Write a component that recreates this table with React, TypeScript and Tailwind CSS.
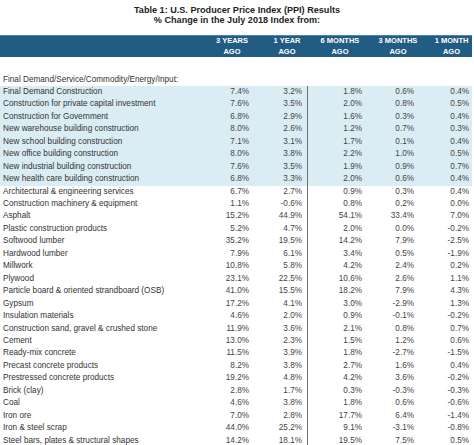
import React from "react";

type Row = [string, string, string, string, string, string];

const rows: Row[] = [
  ["Final Demand Construction", "7.4%", "3.2%", "1.8%", "0.6%", "0.4%"],
  ["Construction for private capital investment", "7.6%", "3.5%", "2.0%", "0.8%", "0.5%"],
  ["Construction for Government", "6.8%", "2.9%", "1.6%", "0.3%", "0.4%"],
  ["New warehouse building construction", "8.0%", "2.6%", "1.2%", "0.7%", "0.3%"],
  ["New school building construction", "7.1%", "3.1%", "1.7%", "0.1%", "0.4%"],
  ["New office building construction", "8.0%", "3.8%", "2.2%", "1.0%", "0.5%"],
  ["New industrial building construction", "7.6%", "3.5%", "1.9%", "0.9%", "0.7%"],
  ["New health care building construction", "6.8%", "3.3%", "2.0%", "0.6%", "0.4%"],
  ["Architectural & engineering services", "6.7%", "2.7%", "0.9%", "0.3%", "0.4%"],
  ["Construction machinery & equipment", "1.1%", "-0.6%", "0.8%", "0.2%", "0.0%"],
  ["Asphalt", "15.2%", "44.9%", "54.1%", "33.4%", "7.0%"],
  ["Plastic construction products", "5.2%", "4.7%", "2.0%", "0.0%", "-0.2%"],
  ["Softwood lumber", "35.2%", "19.5%", "14.2%", "7.9%", "-2.5%"],
  ["Hardwood lumber", "7.9%", "6.1%", "3.4%", "0.5%", "-1.9%"],
  ["Millwork", "10.8%", "5.8%", "4.2%", "2.4%", "0.2%"],
  ["Plywood", "23.1%", "22.5%", "10.6%", "2.6%", "1.1%"],
  ["Particle board & oriented strandboard (OSB)", "41.0%", "15.5%", "18.2%", "7.9%", "4.3%"],
  ["Gypsum", "17.2%", "4.1%", "3.0%", "-2.9%", "1.3%"],
  ["Insulation materials", "4.6%", "2.0%", "0.9%", "-0.1%", "-0.2%"],
  ["Construction sand, gravel & crushed stone", "11.9%", "3.6%", "2.1%", "0.8%", "0.7%"],
  ["Cement", "13.0%", "2.3%", "1.5%", "1.2%", "0.6%"],
  ["Ready-mix concrete", "11.5%", "3.9%", "1.8%", "-2.7%", "-1.5%"],
  ["Precast concrete products", "8.2%", "3.8%", "2.7%", "1.6%", "0.4%"],
  ["Prestressed concrete products", "19.2%", "4.8%", "4.2%", "3.6%", "-0.2%"],
  ["Brick (clay)", "2.8%", "1.7%", "0.3%", "-0.3%", "-0.3%"],
  ["Coal", "4.6%", "3.8%", "1.8%", "0.6%", "-0.6%"],
  ["Iron ore", "7.0%", "2.8%", "17.7%", "6.4%", "-1.4%"],
  ["Iron & steel scrap", "44.0%", "25.2%", "9.1%", "-3.1%", "-0.8%"],
  ["Steel bars, plates & structural shapes", "14.2%", "18.1%", "19.5%", "7.5%", "0.5%"],
];

export default function App() {
  return (
    <div className="w-[474px] h-[445px] overflow-hidden bg-white font-['Liberation_Sans',Arial,sans-serif]">
      <div className="w-[472px]">
        <div className="pt-[6px] text-center font-bold text-[9.1px] leading-[9.5px] text-[#222] pl-[2px]">
          <div>Table 1: U.S. Producer Price Index (PPI) Results</div>
          <div>% Change in the July 2018 Index from:</div>
        </div>
        <div className="mt-[10px] h-[22px] bg-[#215c83] border-t border-[#4f86a8] flex text-white font-bold text-[7.5px] leading-[10.5px]">
          <div className="w-[205px]" />
          <div className="w-[54px] text-center">3 YEARS<br />AGO</div>
          <div className="w-[56px] text-center">1 YEAR<br />AGO</div>
          <div className="w-[50px] text-center">6 MONTHS<br />AGO</div>
          <div className="w-[66px] text-center">3 MONTHS<br />AGO</div>
          <div className="w-[41px] text-center">1 MONTH<br />AGO</div>
        </div>
        <div className="mt-[16.5px] h-[12.46px] leading-[12.46px] text-[8.2px] text-[#333] pl-[3px]">
          Final Demand/Service/Commodity/Energy/Input:
        </div>
        <div>
          {rows.map((r, i) => (
            <div
              key={i}
              className={`flex h-[12.46px] leading-[12.46px] text-[8.2px] ${i < 8 ? "bg-[#dbedf4]" : "bg-white"}`}
            >
              <div className="w-[200px] pl-[3px] text-[#333] whitespace-nowrap">{r[0]}</div>
              <div className="w-[52px] pr-[3px] text-right text-[#444]">{r[1]}</div>
              <div className="w-[55px] pr-[5px] text-right text-[#444]">{r[2]}</div>
              <div className="w-[58px] pr-[3px] text-right text-[#444] border-l-[1.5px] border-[#707070]">{r[3]}</div>
              <div className="w-[52px] pr-[3px] text-right text-[#444]">{r[4]}</div>
              <div className="w-[55px] pr-[3px] text-right text-[#444]">{r[5]}</div>
            </div>
          ))}
        </div>
      </div>
    </div>
  );
}
